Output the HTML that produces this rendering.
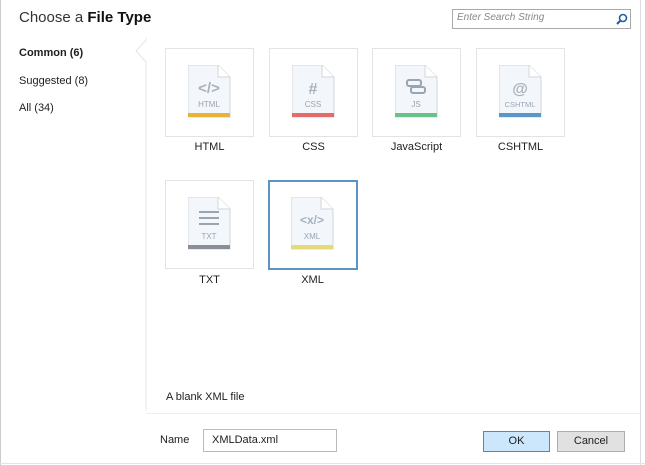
<!DOCTYPE html>
<html><head><style>
body{margin:0;width:645px;height:465px;background:#fff;font-family:"Liberation Sans",sans-serif;position:relative;overflow:hidden;font-size:11px;color:#1e1e1e}
.a{position:absolute}
.tile{position:absolute;width:87px;height:87px;border:1px solid #e3e3e3;background:#fff}
.tile.sel{border:2px solid #5b94c4;width:86px;height:86px}
.lbl{position:absolute;width:89px;text-align:center;font-size:11px}
</style></head><body>
<div class="a" style="left:0;top:0;width:1px;height:465px;background:#ccc"></div>
<div class="a" style="left:640px;top:0;width:1px;height:465px;background:#ddd"></div>
<div class="a" style="left:0;top:463px;width:645px;height:1px;background:#e3e3e3"></div>
<div class="a" style="left:19px;top:9px;font-size:15px;color:#333">Choose a <b style="color:#111">File Type</b></div>
<div class="a" style="left:452px;top:9px;width:177px;height:18px;border:1px solid #aaa"><span style="position:absolute;left:4px;top:2px;font-style:italic;color:#888;font-size:10px">Enter Search String</span>
<svg class="a" style="left:163px;top:3px" width="12" height="12"><circle cx="7" cy="5" r="3.5" stroke="#1e5fa8" stroke-width="1.6" fill="none"/><line x1="4.5" y1="7.5" x2="1" y2="11" stroke="#1e5fa8" stroke-width="2"/></svg></div>
<div class="a" style="left:19px;top:47px;font-weight:bold">Common (6)</div>
<div class="a" style="left:19px;top:75px">Suggested (8)</div>
<div class="a" style="left:19px;top:102px">All (34)</div>
<svg class="a" style="left:134px;top:38px" width="16" height="380"><path d="M12 0 V2 L2 13 L12 24 V372" stroke="#e5e5e5" fill="none"/></svg>
<div class="a" style="left:146px;top:413px;width:494px;height:1px;background:#eee"></div>

<svg width="0" height="0" style="position:absolute"><defs>
<g id="doc"><path d="M0 0 H30 L42 12 V52 H0 Z" fill="#f3f6fa" stroke="#d0d4da"/><path d="M30 0 V12 H42" fill="#fff" stroke="#d0d4da"/></g>
</defs></svg>

<div class="tile" style="left:165px;top:48px"><svg class="a" style="left:22px;top:16px" width="44" height="54"><use href="#doc"/><rect x="0" y="48" width="42" height="4" fill="#e8b33a"/><text x="21" y="28" font-size="15" font-weight="bold" fill="#a8b1bc" text-anchor="middle" font-family="Liberation Sans">&lt;/&gt;</text><text x="21" y="42" font-size="8" fill="#9aa5b2" text-anchor="middle" font-family="Liberation Sans">HTML</text></svg></div>
<div class="lbl" style="left:165px;top:141px">HTML</div>
<div class="tile" style="left:269px;top:48px"><svg class="a" style="left:22px;top:16px" width="44" height="54"><use href="#doc"/><rect x="0" y="48" width="42" height="4" fill="#e66a6a"/><text x="21" y="29" font-size="16" font-weight="bold" fill="#a8b1bc" text-anchor="middle" font-family="Liberation Sans">#</text><text x="21" y="42" font-size="8" fill="#9aa5b2" text-anchor="middle" font-family="Liberation Sans">CSS</text></svg></div>
<div class="lbl" style="left:269px;top:141px">CSS</div>
<div class="tile" style="left:372px;top:48px"><svg class="a" style="left:22px;top:16px" width="44" height="54"><use href="#doc"/><rect x="0" y="48" width="42" height="4" fill="#6cc08a"/><rect x="12" y="15" width="14" height="6" rx="2" fill="none" stroke="#9aa5b2" stroke-width="2"/><rect x="16" y="22" width="14" height="6" rx="2" fill="none" stroke="#9aa5b2" stroke-width="2"/><text x="21" y="42" font-size="8" fill="#9aa5b2" text-anchor="middle" font-family="Liberation Sans">JS</text></svg></div>
<div class="lbl" style="left:372px;top:141px">JavaScript</div>
<div class="tile" style="left:476px;top:48px"><svg class="a" style="left:22px;top:16px" width="44" height="54"><use href="#doc"/><rect x="0" y="48" width="42" height="4" fill="#5a96cc"/><text x="21" y="29" font-size="16" font-weight="bold" fill="#a8b1bc" text-anchor="middle" font-family="Liberation Sans">@</text><text x="21" y="42" font-size="7.5" fill="#9aa5b2" text-anchor="middle" font-family="Liberation Sans">CSHTML</text></svg></div>
<div class="lbl" style="left:476px;top:141px">CSHTML</div>
<div class="tile" style="left:165px;top:180px"><svg class="a" style="left:22px;top:16px" width="44" height="54"><use href="#doc"/><rect x="0" y="48" width="42" height="4" fill="#8a8f96"/><path d="M11 15H31M11 21H31M11 27H31" stroke="#9aa5b2" stroke-width="2"/><text x="21" y="42" font-size="8" fill="#9aa5b2" text-anchor="middle" font-family="Liberation Sans">TXT</text></svg></div>
<div class="lbl" style="left:165px;top:274px">TXT</div>
<div class="tile sel" style="left:268px;top:180px"><svg class="a" style="left:21px;top:15px" width="44" height="54"><use href="#doc"/><rect x="0" y="48" width="42" height="4" fill="#e6d97a"/><text x="21" y="27" font-size="12" font-weight="bold" fill="#a8b1bc" text-anchor="middle" font-family="Liberation Sans">&lt;x/&gt;</text><text x="21" y="42" font-size="8" fill="#9aa5b2" text-anchor="middle" font-family="Liberation Sans">XML</text></svg></div>
<div class="lbl" style="left:268px;top:274px">XML</div>

<div class="a" style="left:166px;top:391px">A blank XML file</div>
<div class="a" style="left:160px;top:434px">Name</div>
<div class="a" style="left:203px;top:429px;width:132px;height:21px;border:1px solid #bbb"><span style="position:absolute;left:8px;top:4px">XMLData.xml</span></div>
<div class="a" style="left:483px;top:431px;width:65px;height:19px;border:1px solid #3c8fd6;background:#cce6fb;text-align:center;line-height:19px">OK</div>
<div class="a" style="left:557px;top:431px;width:66px;height:19px;border:1px solid #adadad;background:#e1e1e1;text-align:center;line-height:19px">Cancel</div>
</body></html>
